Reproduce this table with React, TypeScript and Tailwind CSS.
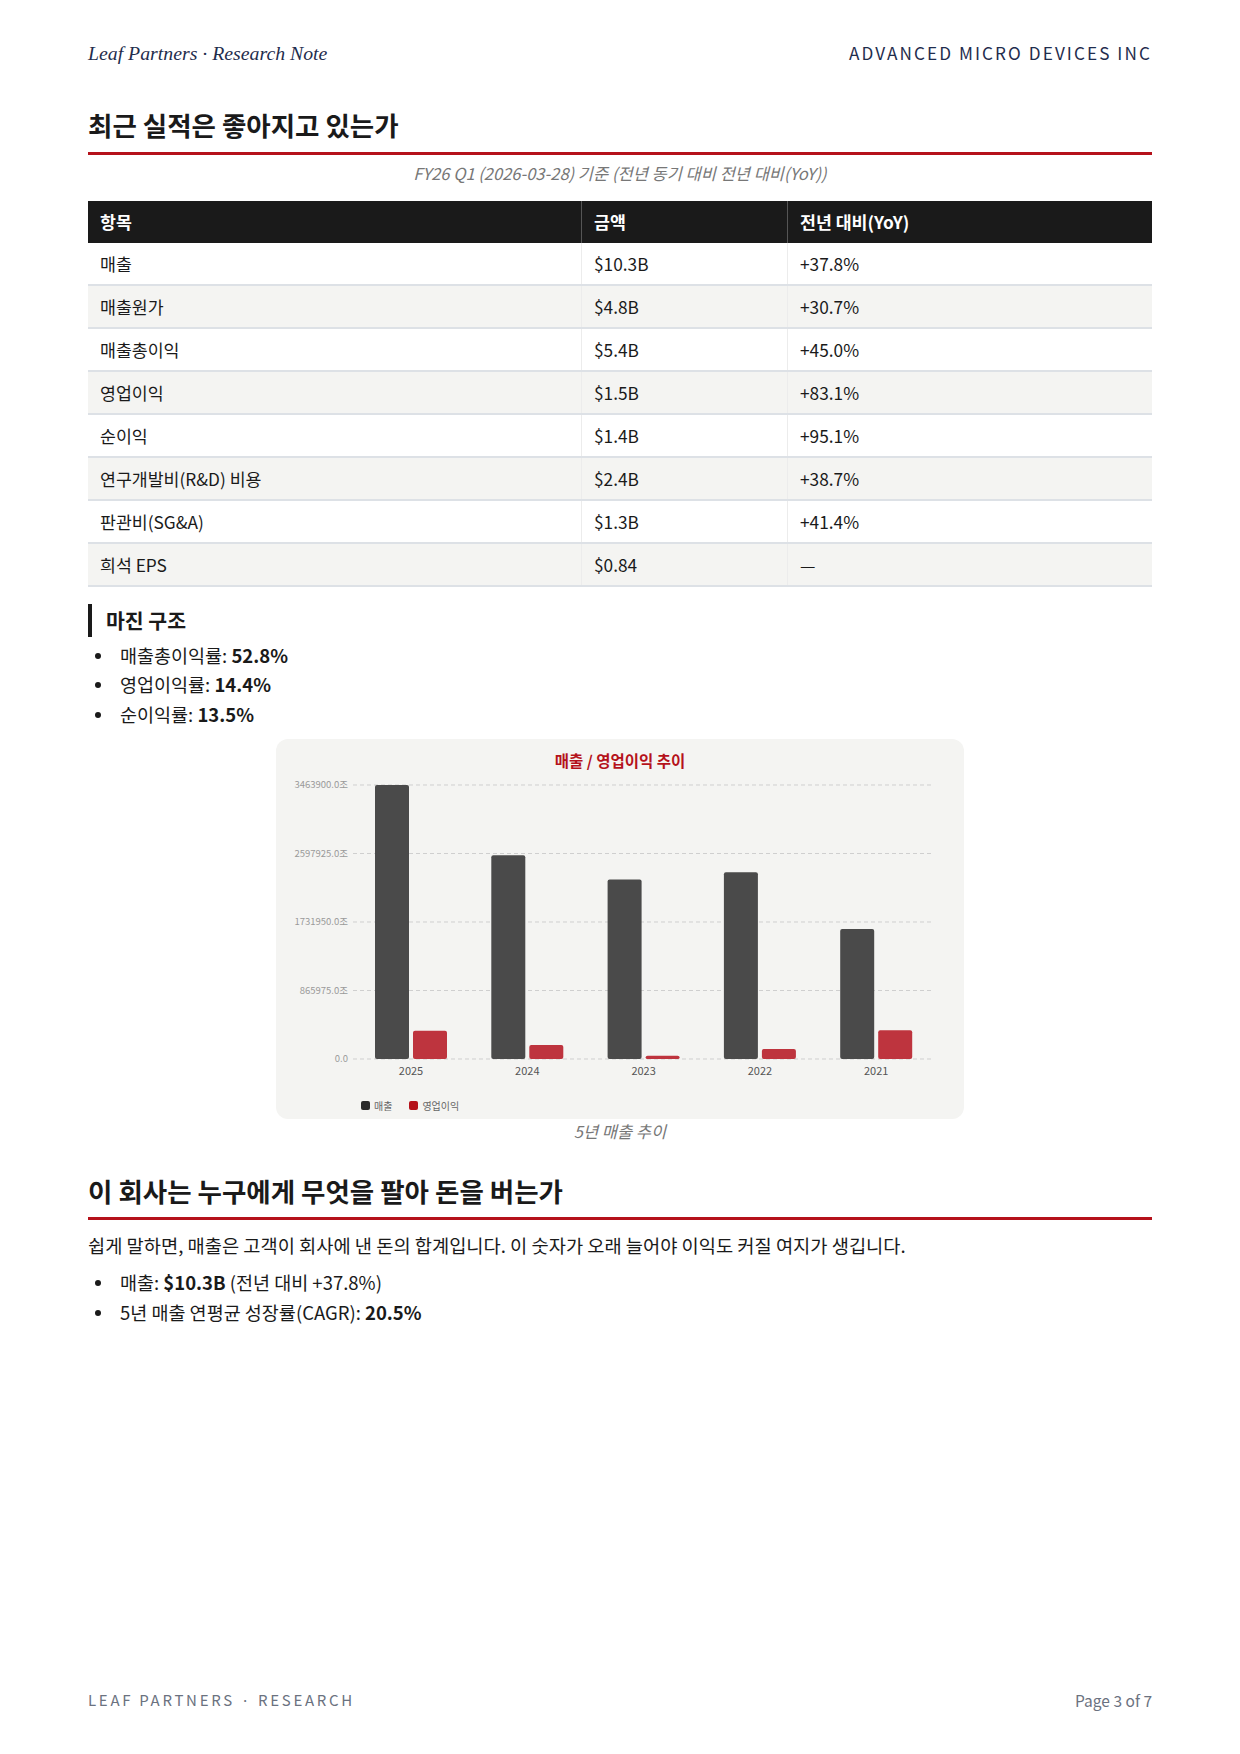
import React from "react";

const FONT = "font-['Noto_Sans_CJK_KR','Noto_Sans',sans-serif]";

const rows = [
  { label: "매출", amount: "$10.3B", yoy: "+37.8%" },
  { label: "매출원가", amount: "$4.8B", yoy: "+30.7%" },
  { label: "매출총이익", amount: "$5.4B", yoy: "+45.0%" },
  { label: "영업이익", amount: "$1.5B", yoy: "+83.1%" },
  { label: "순이익", amount: "$1.4B", yoy: "+95.1%" },
  { label: "연구개발비(R&D) 비용", amount: "$2.4B", yoy: "+38.7%" },
  { label: "판관비(SG&A)", amount: "$1.3B", yoy: "+41.4%" },
  { label: "희석 EPS", amount: "$0.84", yoy: "—" },
];

// 연도별 매출 / 영업이익
const chartData = [
  { year: "2025", revenue: 3463900, op: 357000 },
  { year: "2024", revenue: 2576800, op: 176000 },
  { year: "2023", revenue: 2268000, op: 40100 },
  { year: "2022", revenue: 2360100, op: 126400 },
  { year: "2021", revenue: 1643400, op: 364800 },
];

const ticks = [3463900, 2597925, 1731950, 865975, 0];

function Bullet({ children }: { children: React.ReactNode }) {
  return (
    <li className="flex items-center h-[29.5px]">
      <span className="w-[6px] h-[6px] rounded-full bg-[#1a1a1a] ml-[7px] mr-[19px] shrink-0" />
      <span>{children}</span>
    </li>
  );
}

function RevenueChart() {
  const left = 77;
  const right = 655;
  const top = 15;
  const zero = 289;
  const max = 3463900;
  const h = zero - top;
  const slot = 116.3;

  return (
    <div className="mx-auto w-[688px] h-[380px] rounded-xl bg-[#f4f4f2] flex flex-col">
      <div className="pt-[10px] h-[31px] text-center text-[15.5px] leading-[22px] font-bold text-[#b5121b]">
        매출 / 영업이익 추이
      </div>
      <svg width={688} height={314} className="block">
        {ticks.map((t, i) => {
          const y = zero - (t / max) * h;
          return (
            <g key={i}>
              <line x1={left} x2={right} y1={y} y2={y} stroke="#cfcfcf" strokeWidth={1} strokeDasharray="4 3" />
              <text x={left - 5} y={y + 3} textAnchor="end" fontSize={9.5} fill="#9a9a9a">
                {t === 0 ? "0.0" : `${t}.0조`}
              </text>
            </g>
          );
        })}
        {chartData.map((d, i) => {
          const cx = left + slot * i + 58;
          const rh = (d.revenue / max) * h;
          const oh = Math.max((d.op / max) * h, 2);
          return (
            <g key={d.year}>
              <rect x={cx - 36} y={zero - rh} width={34} height={rh} rx={2} fill="#4a4a4a" />
              <rect x={cx + 2} y={zero - oh} width={34} height={oh} rx={2} fill="#be343e" />
              <text x={cx} y={zero + 16} textAnchor="middle" fontSize={11} fill="#555">
                {d.year}
              </text>
            </g>
          );
        })}
      </svg>
      <div className="mt-[15px] ml-[85px] flex items-center gap-[4px] text-[10px] leading-[14px] text-[#666]">
        <span className="w-[9px] h-[9px] rounded-[2px] bg-[#2b2b2b]" />
        <span className="mr-[13px]">매출</span>
        <span className="w-[9px] h-[9px] rounded-[2px] bg-[#b5121b]" />
        <span>영업이익</span>
      </div>
    </div>
  );
}

export default function App() {
  return (
    <div className={`${FONT} w-[1240px] min-h-[1754px] bg-white text-[#1a1a1a] px-[88px] flex flex-col`}>
      {/* header */}
      <div className="pt-[41px] flex justify-between items-center h-[65px]">
        <div className="font-['Liberation_Serif',serif] italic text-[19.8px] leading-[24px] text-[#1f2d4d]">
          Leaf Partners · Research Note
        </div>
        <div className="text-[17.2px] leading-[24px] tracking-[0.12em] text-[#1f2d4d]">
          ADVANCED MICRO DEVICES INC
        </div>
      </div>

      <h1 className="mt-[42px] text-[26.5px] leading-[36px] font-bold pb-[9px] border-b-[3px] border-[#b5121b]">
        최근 실적은 좋아지고 있는가
      </h1>
      <div className="mt-[8px] text-center italic text-[16.5px] leading-[20px] text-[#777]">
        FY26 Q1 (2026-03-28) 기준 (전년 동기 대비 전년 대비(YoY))
      </div>

      {/* table */}
      <div className="mt-[18px] text-[17.3px]">
        <div className="flex h-[42px] bg-[#1a1a1a] text-white font-bold items-center">
          <div className="w-[494px] px-[12px] h-full flex items-center border-r border-[#555]">항목</div>
          <div className="w-[206px] px-[12px] h-full flex items-center border-r border-[#555]">금액</div>
          <div className="flex-1 px-[12px] h-full flex items-center">전년 대비(YoY)</div>
        </div>
        {rows.map((r, i) => (
          <div
            key={r.label}
            className={`flex h-[43px] items-center border-b-2 border-[#dde1e6] ${i % 2 === 1 ? "bg-[#f4f4f2]" : "bg-white"}`}
          >
            <div className="w-[494px] px-[12px] h-full flex items-center border-r border-[#ececec]">{r.label}</div>
            <div className="w-[206px] px-[12px] h-full flex items-center border-r border-[#ececec]">{r.amount}</div>
            <div className="flex-1 px-[12px] h-full flex items-center">{r.yoy}</div>
          </div>
        ))}
      </div>

      <h3 className="mt-[17px] h-[33px] border-l-4 border-[#1a1a1a] pl-[14px] text-[20.5px] leading-[33px] font-bold">
        마진 구조
      </h3>
      <ul className="mt-[4px] text-[18.5px]">
        <Bullet>
          매출총이익률: <b>52.8%</b>
        </Bullet>
        <Bullet>
          영업이익률: <b>14.4%</b>
        </Bullet>
        <Bullet>
          순이익률: <b>13.5%</b>
        </Bullet>
      </ul>

      <div className="mt-[9px]">
        <RevenueChart />
        <div className="mt-[2px] text-center italic text-[16.5px] leading-[20px] text-[#777]">5년 매출 추이</div>
      </div>

      <h1 className="mt-[32px] text-[26.5px] leading-[36px] font-bold pb-[8px] border-b-[3px] border-[#b5121b]">
        이 회사는 누구에게 무엇을 팔아 돈을 버는가
      </h1>
      <p className="mt-[12px] text-[18.7px] leading-[26px]">
        쉽게 말하면, 매출은 고객이 회사에 낸 돈의 합계입니다. 이 숫자가 오래 늘어야 이익도 커질 여지가 생깁니다.
      </p>
      <ul className="mt-[11px] text-[18.5px]">
        <Bullet>
          매출: <b>$10.3B</b> (전년 대비 +37.8%)
        </Bullet>
        <Bullet>
          5년 매출 연평균 성장률(CAGR): <b>20.5%</b>
        </Bullet>
      </ul>

      {/* footer */}
      <div className="mt-auto pb-[44px] flex justify-between items-center text-[15px] leading-[20px] text-[#6b7280]">
        <span className="tracking-[0.18em]">LEAF PARTNERS · RESEARCH</span>
        <span className="text-[15.5px]">Page 3 of 7</span>
      </div>
    </div>
  );
}
